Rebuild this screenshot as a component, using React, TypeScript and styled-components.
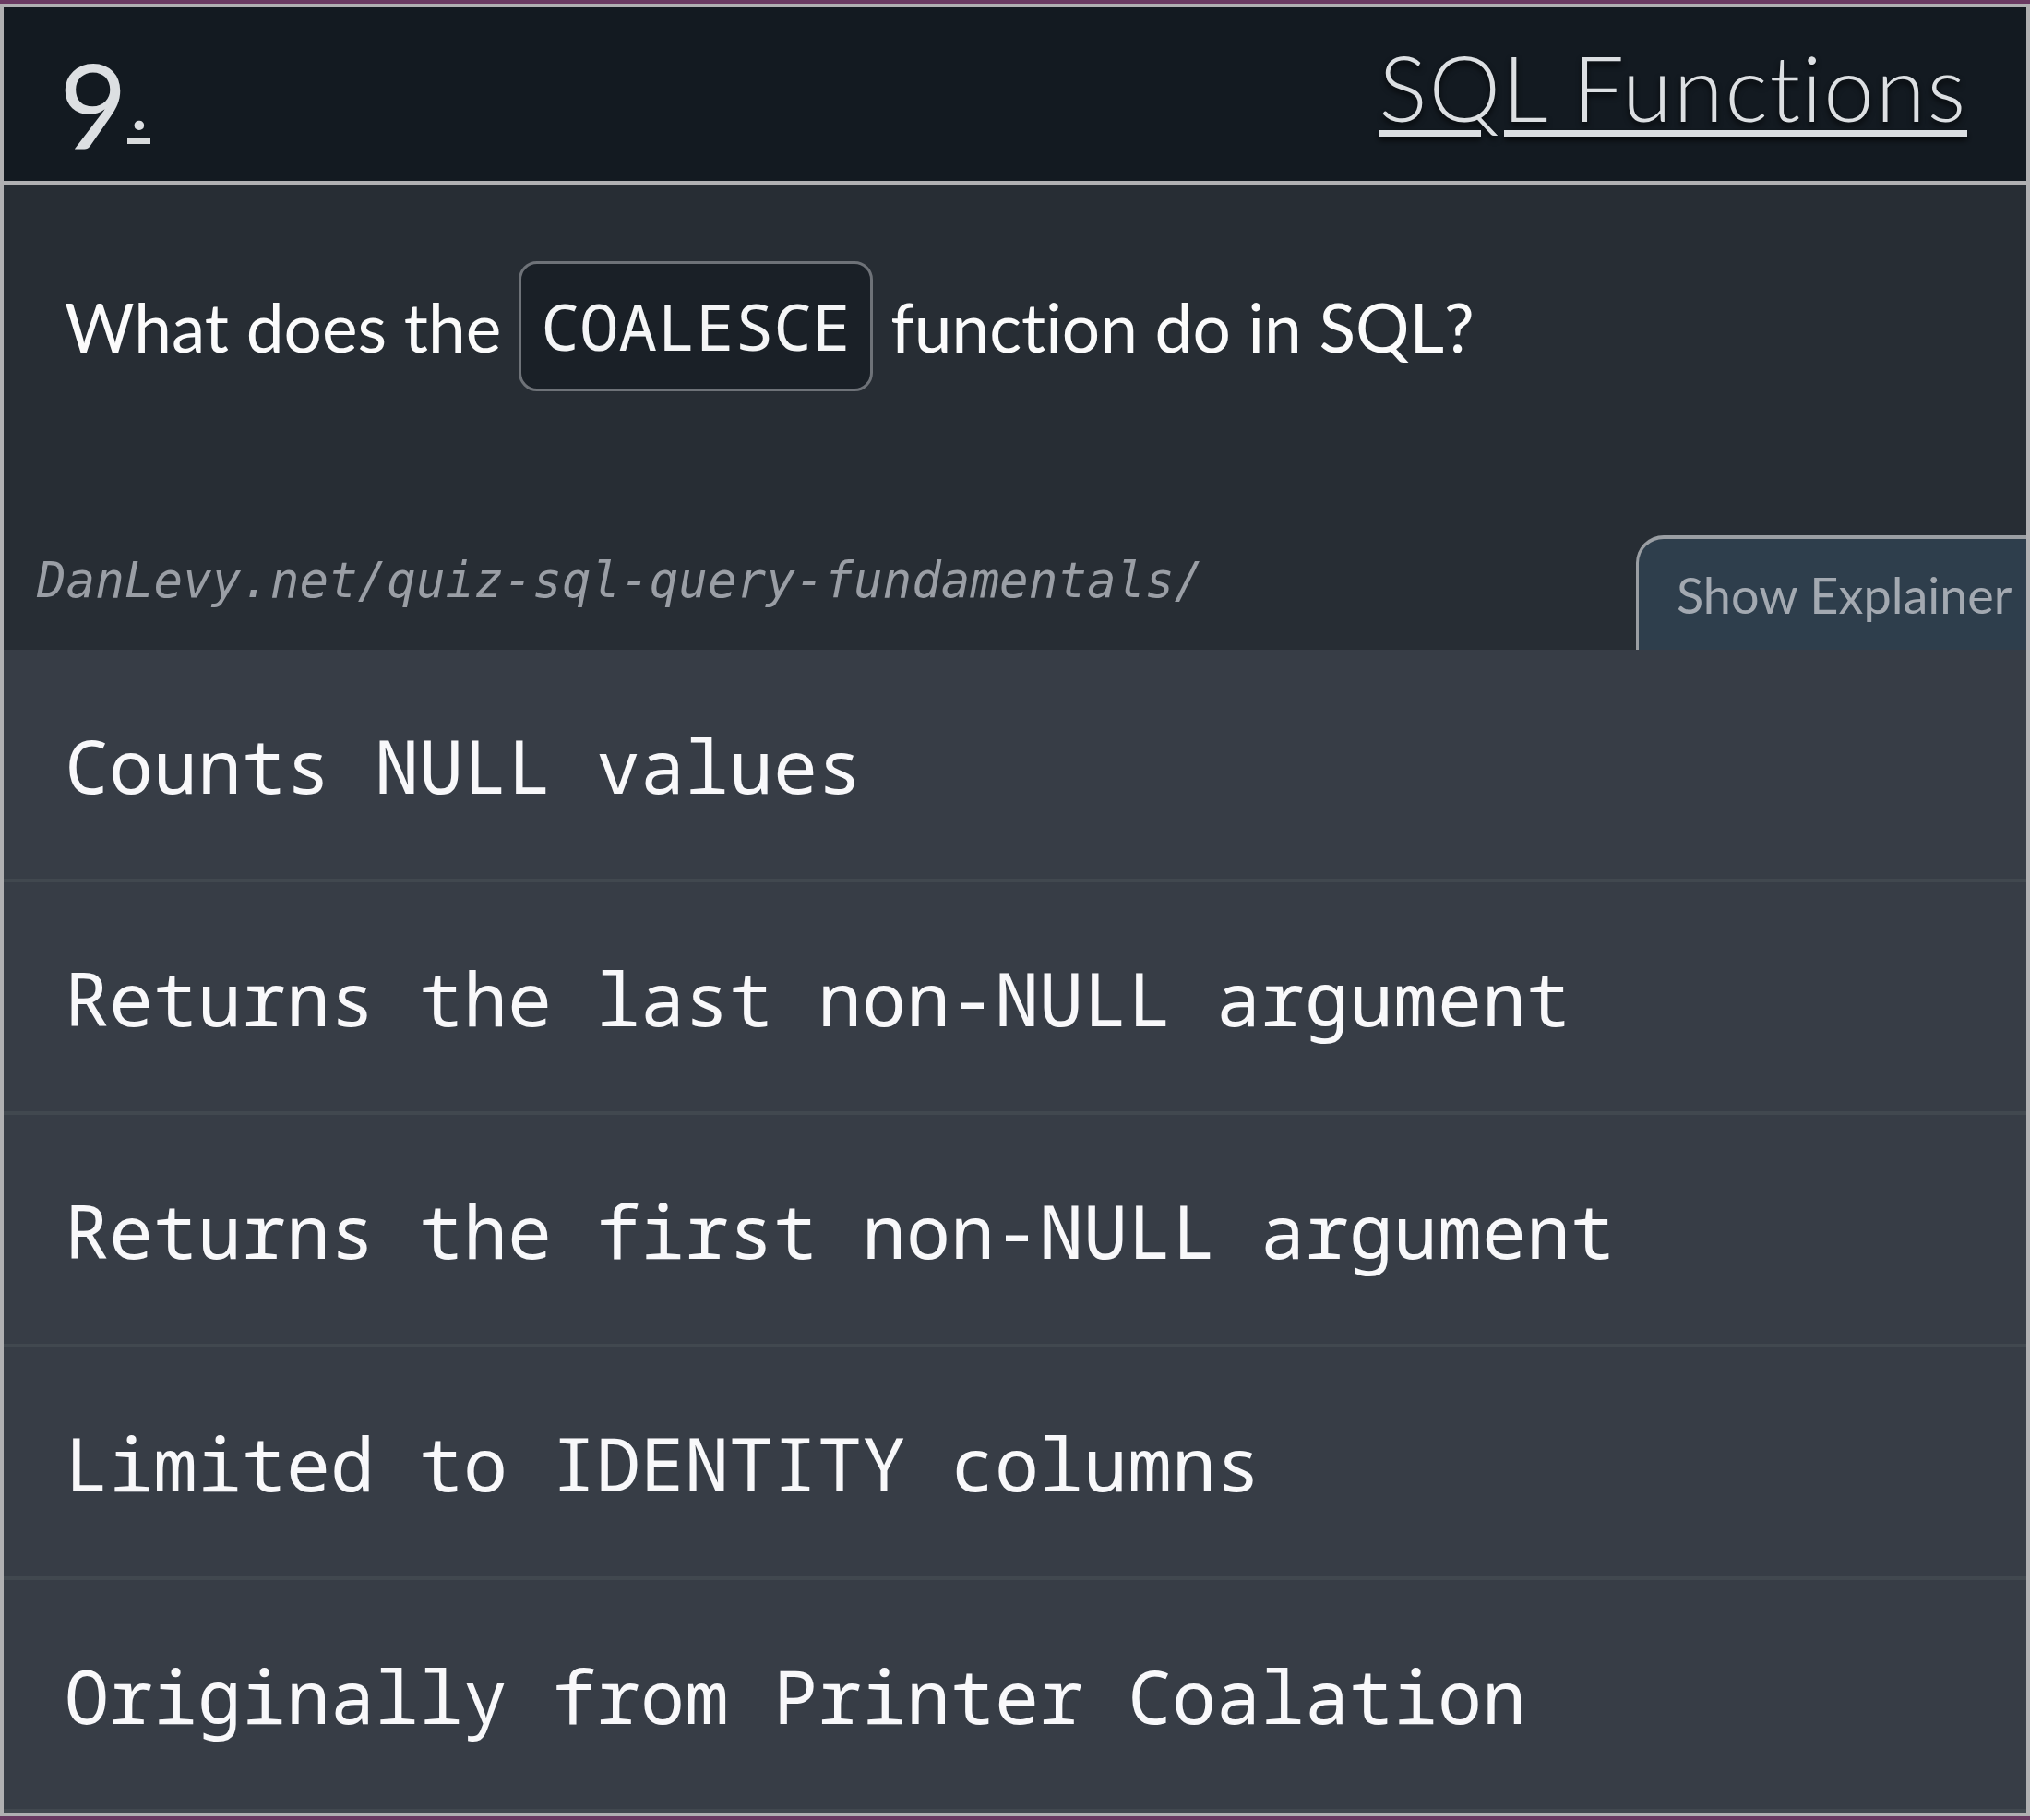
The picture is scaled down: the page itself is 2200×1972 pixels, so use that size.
import React from "react";
import styled, { createGlobalStyle } from "styled-components";

const GlobalStyle = createGlobalStyle`
  html, body {
    margin: 0;
    padding: 0;
    background: #6a3a62;
  }
  body {
    padding: 4px 0;
    font-family: "Lato", "Noto Sans", sans-serif;
    font-variant-ligatures: none;
  }
  * { box-sizing: border-box; }
`;

const Card = styled.section`
  border: 4px solid #b0b0b2;
  background: #272d34;
  display: flex;
  flex-direction: column;
`;

const Header = styled.header`
  height: 192px;
  background: #131a21;
  border-bottom: 4px solid #b0b0b2;
  display: flex;
  align-items: flex-start;
  justify-content: space-between;
  padding: 0 64px 0 60px;
`;

const Number = styled.div`
  display: flex;
  align-items: flex-start;
  margin-top: 41px;
  color: #dcdfe2;
`;

const Digit = styled.span`
  font-family: "Lato", sans-serif;
  font-weight: 400;
  font-size: 128px;
  line-height: 1;
`;

const Dot = styled.a`
  display: block;
  width: 25px;
  margin-top: 36px;
  font-family: "Lato", sans-serif;
  font-weight: 900;
  font-size: 64px;
  line-height: 64px;
  text-align: center;
  color: #dcdfe2;
  text-decoration: none;
  border-bottom: 7px solid #d8dadc;
`;

const Title = styled.a`
  margin-top: 37px;
  font-family: "Lato", sans-serif;
  font-weight: 300;
  font-size: 98px;
  letter-spacing: 1.8px;
  line-height: 1;
  color: #dcdfe2;
  text-decoration: underline;
  text-decoration-thickness: 7px;
  text-underline-offset: 9px;
  text-shadow: 0 4px 6px rgba(0, 0, 0, 0.7);
`;

const Body = styled.div`
  display: flex;
  flex-direction: column;
  background: #272d34;
`;

const Question = styled.div`
  display: flex;
  align-items: center;
  column-gap: 19px;
  padding: 83px 66px 0 66px;
  font-family: "Lato", sans-serif;
  font-size: 73px;
  color: #fbfbfb;
`;

const Code = styled.code`
  display: block;
  height: 141px;
  line-height: 135px;
  padding: 0 21px;
  border: 3px solid #6e7278;
  border-radius: 20px;
  background: #1a2027;
  font-family: "Noto Sans Mono", "DejaVu Sans Mono", monospace;
  font-size: 70px;
  color: #f4f5f6;
`;

const Footer = styled.div`
  margin-top: 156px;
  height: 124px;
  display: flex;
  justify-content: space-between;
  align-items: flex-start;
`;

const Url = styled.div`
  padding: 23px 0 0 36px;
  font-family: "DejaVu Sans Mono", monospace;
  font-style: italic;
  font-size: 52.5px;
  line-height: 1;
  color: #9a9ea5;
`;

const ExplainerTab = styled.button`
  width: 423px;
  height: 124px;
  display: flex;
  align-items: center;
  padding: 0 0 0 41px;
  background: #2e3e4c;
  border: none;
  border-top: 4px solid #9a9ea3;
  border-left: 3px solid #9a9ea3;
  border-top-left-radius: 30px;
  font-family: "Lato", sans-serif;
  font-size: 54px;
  letter-spacing: 0;
  color: #a3a9b1;
  cursor: pointer;
`;

const Options = styled.ol`
  list-style: none;
  margin: 0;
  padding: 0;
`;

const Option = styled.li`
  height: 252px;
  display: flex;
  align-items: center;
  padding-left: 66px;
  background: #373d46;
  border-bottom: 4px solid #41484f;
  font-family: "Noto Sans Mono", "DejaVu Sans Mono", monospace;
  font-size: 80px;
  color: #f8f8fa;
  white-space: pre;
`;

const options = [
  "Counts NULL values",
  "Returns the last non-NULL argument",
  "Returns the first non-NULL argument",
  "Limited to IDENTITY columns",
  "Originally from Printer Coalation",
];

export default function App() {
  return (
    <>
      <GlobalStyle />
      <Card>
        <Header>
          <Number>
            <Digit>9</Digit>
            <Dot href="#">.</Dot>
          </Number>
          <Title href="#">SQL Functions</Title>
        </Header>
        <Body>
          <Question>
            <span>What does the</span>
            <Code>COALESCE</Code>
            <span>function do in SQL?</span>
          </Question>
          <Footer>
            <Url>DanLevy.net/quiz-sql-query-fundamentals/</Url>
            <ExplainerTab>Show Explainer</ExplainerTab>
          </Footer>
        </Body>
        <Options>
          {options.map((o) => (
            <Option key={o}>{o}</Option>
          ))}
        </Options>
      </Card>
    </>
  );
}
